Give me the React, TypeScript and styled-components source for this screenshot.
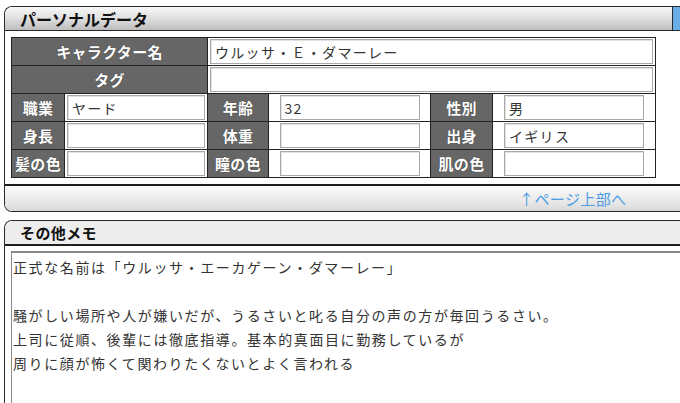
import React from "react";
import styled, { createGlobalStyle } from "styled-components";

const GlobalStyle = createGlobalStyle`
  html, body {
    margin: 0;
    padding: 0;
    background: #fff;
    overflow: hidden;
  }
  body {
    font-family: "Noto Sans CJK JP", "Noto Sans", sans-serif;
    color: #222;
  }
`;

const Page = styled.div`
  width: 680px;
  height: 403px;
  overflow: hidden;
  padding: 6px 0 0 4px;
  box-sizing: border-box;
  display: flex;
  flex-direction: column;
  gap: 8px;
`;

const Panel = styled.section`
  width: 760px;
  flex: none;
  border: 1px solid #2a2a2a;
  border-right: none;
  border-radius: 8px 0 0 8px;
  overflow: hidden;
  background: #fff;
  display: flex;
  flex-direction: column;
`;

const HeaderRow = styled.div`
  display: flex;
  height: 23px;
  border-bottom: 1px solid #2a2a2a;
`;

const HeaderTitle = styled.h2<{ $flat?: boolean }>`
  margin: 0;
  flex: ${(p) => (p.$flat ? "1" : "0 0 668px")};
  box-sizing: border-box;
  display: flex;
  align-items: center;
  padding-left: 15px;
  font-size: ${(p) => (p.$flat ? "15px" : "16px")};
  font-weight: 700;
  color: #111;
  letter-spacing: ${(p) => (p.$flat ? "0.4px" : "0")};
  background: ${(p) =>
    p.$flat ? "#ededed" : "linear-gradient(#f7f7f7, #e2e2e2 45%, #bdbdbd)"};
  border-right: ${(p) => (p.$flat ? "none" : "1px solid #2a2a2a")};
`;

const HeaderTab = styled.div`
  flex: 1;
  background: #6aaee8;
`;

const Body = styled.div`
  padding: 6px 0 6px 6px;
`;

const Grid = styled.div`
  display: grid;
  grid-template-columns: 52px 142px 60px 161px 61px 162px;
  grid-auto-rows: 27px;
  gap: 1px;
  width: max-content;
  background: #222;
  border: 1px solid #222;
`;

const Label = styled.div<{ $span?: number }>`
  grid-column: span ${(p) => p.$span ?? 1};
  background: #666;
  color: #fff;
  font-size: 15px;
  font-weight: 700;
  letter-spacing: 0.3px;
  display: flex;
  align-items: center;
  justify-content: center;
  white-space: nowrap;
  text-shadow: 0 0 1px #333;
`;

const Cell = styled.div<{ $span?: number }>`
  grid-column: span ${(p) => p.$span ?? 1};
  background: #fff;
  display: flex;
  align-items: center;
  justify-content: center;
  padding: 1px 2px;
  box-sizing: border-box;
`;

const Field = styled.div<{ $wide?: boolean }>`
  box-sizing: border-box;
  width: ${(p) => (p.$wide ? "100%" : "140px")};
  height: 25px;
  border: 1px solid #a8a8a8;
  box-shadow: inset 1px 1px 0 #e2e2e2;
  background: #fff;
  padding: 0 4px;
  font-size: 14px;
  letter-spacing: 1.3px;
  color: #333;
  display: flex;
  align-items: center;
  white-space: nowrap;
`;

const Footer = styled.div`
  height: 25px;
  border-top: 2px solid #1e1e1e;
  background: linear-gradient(#fbfbfb, #e9e9e9 60%, #d9d9d9);
  display: flex;
  align-items: center;
  padding-left: 514px;
`;

const TopLink = styled.a`
  color: #4d9be3;
  font-size: 15px;
  letter-spacing: 0.4px;
  text-decoration: none;
  white-space: nowrap;
`;

const MemoHeader = styled.div`
  display: flex;
  height: 23px;
  border-bottom: 2px solid #1e1e1e;
`;

const MemoBody = styled.div`
  padding: 5px 0 0 6px;
  height: 200px;
`;

const Memo = styled.div`
  border: 1px solid #8a8a8a;
  border-top: 2px solid #8a8a8a;
  border-right: none;
  height: 100%;
  padding: 2px 1px;
  font-size: 14px;
  line-height: 24px;
  letter-spacing: 1.6px;
  color: #333;
  white-space: pre;
`;

const memoText = [
  "正式な名前は「ウルッサ・エーカゲーン・ダマーレー」",
  "",
  "騒がしい場所や人が嫌いだが、うるさいと叱る自分の声の方が毎回うるさい。",
  "上司に従順、後輩には徹底指導。基本的真面目に勤務しているが",
  "周りに顔が怖くて関わりたくないとよく言われる",
].join("\n");

const rows: [string, string][] = [
  ["職業", "ヤード"],
  ["年齢", "32"],
  ["性別", "男"],
  ["身長", ""],
  ["体重", ""],
  ["出身", "イギリス"],
  ["髪の色", ""],
  ["瞳の色", ""],
  ["肌の色", ""],
];

export default function App() {
  return (
    <>
      <GlobalStyle />
      <Page>
        <Panel>
          <HeaderRow>
            <HeaderTitle>パーソナルデータ</HeaderTitle>
            <HeaderTab />
          </HeaderRow>
          <Body>
            <Grid>
              <Label $span={2}>キャラクター名</Label>
              <Cell $span={4}>
                <Field $wide>ウルッサ・Ｅ・ダマーレー</Field>
              </Cell>
              <Label $span={2}>タグ</Label>
              <Cell $span={4}>
                <Field $wide />
              </Cell>
              {rows.map(([label, value]) => (
                <React.Fragment key={label}>
                  <Label>{label}</Label>
                  <Cell>
                    <Field>{value}</Field>
                  </Cell>
                </React.Fragment>
              ))}
            </Grid>
          </Body>
          <Footer>
            <TopLink href="#top">↑ページ上部へ</TopLink>
          </Footer>
        </Panel>
        <Panel>
          <MemoHeader>
            <HeaderTitle $flat>その他メモ</HeaderTitle>
          </MemoHeader>
          <MemoBody>
            <Memo>{memoText}</Memo>
          </MemoBody>
        </Panel>
      </Page>
    </>
  );
}
